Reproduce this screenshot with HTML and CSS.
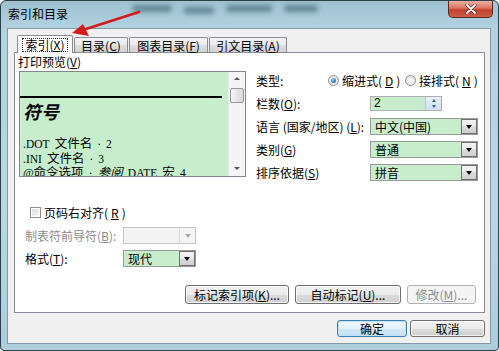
FILE: index.html
```html
<!DOCTYPE html>
<html>
<head>
    <meta charset="utf-8">
    <title>索引和目录</title>
    <link rel="stylesheet" href="styles.css">
</head>
<body>
<div class="window">
    <!-- red annotation arrow -->
    <svg class="arrow" width="150" height="40" viewBox="0 0 150 40">
        <line x1="139" y1="12" x2="86" y2="29" stroke="#d21c1c" stroke-width="2.6" stroke-linecap="round"/>
        <polygon points="72,33 83,24 89,36" fill="#d21c1c"/>
    </svg>

    <div class="titlebar">
        <span class="title">索引和目录</span>
        <div class="glass"><i class="g1"></i><i class="g2"></i><i class="g3"></i><i class="g4"></i></div>
        <div class="close">
            <svg width="12" height="10" viewBox="0 0 12 10">
                <path d="M2 1 L10 9 M10 1 L2 9" stroke="#5a2a22" stroke-width="3.2" stroke-linecap="round"/>
                <path d="M2 1 L10 9 M10 1 L2 9" stroke="#fff" stroke-width="1.8" stroke-linecap="round"/>
            </svg>
        </div>
    </div>

    <div class="client">
        <div class="tabs">
            <div class="tab active"><span class="focus">索引(<u>X</u>)</span></div>
            <div class="tab t2">目录(<u>C</u>)</div>
            <div class="tab t3">图表目录(<u>F</u>)</div>
            <div class="tab t4">引文目录(<u>A</u>)</div>
        </div>

        <div class="panel">
            <div class="top">
                <div class="left">
                    <div class="caption">打印预览(<u>V</u>)</div>
                    <div class="preview">
                        <div class="page">
                            <div class="rule"></div>
                            <div class="heading">符号</div>
                            <div class="entry first"><span class="lat">.DOT</span> 文件名 <span class="lat">· 2</span></div>
                            <div class="entry"><span class="lat">.INI</span> 文件名 <span class="lat">· 3</span></div>
                            <div class="entry"><span class="lat">@</span>命令选项 <span class="lat">·</span> <i>参阅</i> <span class="lat">DATE</span> 宏 <span class="lat">4</span></div>
                        </div>
                        <div class="vscroll">
                            <span class="up"></span>
                            <span class="thumb"></span>
                            <span class="down"></span>
                        </div>
                    </div>
                </div>

                <div class="right">
                    <div class="typerow">
                        <span class="typelabel">类型:</span>
                        <label class="opt first-opt"><span class="radio on"></span>缩进式(<u>D</u>)</label>
                        <label class="opt"><span class="radio"></span>接排式(<u>N</u>)</label>
                    </div>

                    <span>栏数(<u>O</u>):</span>
                    <div class="spin">
                        <span class="val">2</span>
                        <span class="btns"><span class="sup"></span><span class="sdown"></span></span>
                    </div>

                    <span>语言 (国家/地区) (<u>L</u>):</span>
                    <div class="combo"><span>中文(中国)</span><span class="drop"></span></div>

                    <span>类别(<u>G</u>)</span>
                    <div class="combo"><span>普通</span><span class="drop"></span></div>

                    <span>排序依据(<u>S</u>)</span>
                    <div class="combo"><span>拼音</span><span class="drop"></span></div>
                </div>
            </div>

            <div class="lower">
                <label class="checkrow"><span class="check"></span>页码右对齐(<u>R</u>)</label>

                <span class="disabled">制表符前导符(<u>B</u>):</span>
                <div class="combo off"><span></span><span class="drop"></span></div>

                <span>格式(<u>T</u>):</span>
                <div class="combo"><span>现代</span><span class="drop"></span></div>
            </div>

            <div class="actions">
                <button class="btn w1">标记索引项(<u>K</u>)...</button>
                <button class="btn w2">自动标记(<u>U</u>)...</button>
                <button class="btn w3 dis">修改(<u>M</u>)...</button>
            </div>
        </div>

        <div class="footer">
            <button class="btn ok">确定</button>
            <button class="btn cancel">取消</button>
        </div>
    </div>
</div>
</body>
</html>
```

FILE: styles.css
```css
* { box-sizing: border-box; }

body {
    margin: 0;
    background: #fff;
    font-family: "Noto Sans CJK SC", sans-serif;
    font-size: 12px;
    color: #000;
}

u { text-decoration: underline; }

.window {
    position: relative;
    width: 499px;
    height: 351px;
    border: 1px solid #2f3f4a;
    border-radius: 6px 6px 4px 4px;
    background: linear-gradient(#9ec2d1, #b2d2df 27px, #b9d7e4 60%, #abcddc);
    display: flex;
    flex-direction: column;
    overflow: hidden;
}

.arrow {
    position: absolute;
    top: -1px;
    left: -1px;
    z-index: 5;
}

/* title bar */
.titlebar {
    height: 27px;
    flex-shrink: 0;
    display: flex;
    align-items: flex-start;
}
.title {
    margin: 6px 0 0 7px;
    line-height: 14px;
}
.glass {
    display: flex;
    gap: 12px;
    margin: 4px 0 0 64px;
    filter: blur(2.5px);
    opacity: .6;
}
.glass i { height: 7px; background: #3c5f6e; border-radius: 3px; }
.glass .g1 { width: 40px; }
.glass .g2 { width: 30px; margin-top: 2px; }
.glass .g3 { width: 46px; }
.glass .g4 { width: 34px; }
.close {
    margin-left: auto;
    margin-right: 5px;
    width: 45px;
    height: 17px;
    border: 1px solid #5c2a22;
    border-top: none;
    border-radius: 0 0 5px 5px;
    background: linear-gradient(#eab0a2, #d9735e 45%, #c3402b 55%, #c96048);
    display: flex;
    align-items: center;
    justify-content: center;
}

/* client area */
.client {
    flex: 1;
    margin: 0 7px 6px 6px;
    background: #f0f0f0;
    border: 1px solid #8299a8;
    padding: 6px 5px 0 6px;
}

.tabs {
    display: flex;
    align-items: flex-end;
    height: 17px;
    padding-left: 3px;
}
.tab {
    height: 15px;
    margin-left: 1px;
    border: 1px solid #898c95;
    border-bottom: none;
    border-radius: 2px 2px 0 0;
    background: linear-gradient(#f3f3f3, #ebebeb 50%, #dedede 50%, #d2d2d2);
    display: flex;
    align-items: center;
    justify-content: center;
    line-height: 13px;
}
.tab.active {
    height: 18px;
    margin-left: 0;
    margin-bottom: -1px;
    width: 56px;
    background: #fff;
    position: relative;
    z-index: 1;
}
.t2 { width: 54px; }
.t3 { width: 79px; }
.t4 { width: 78px; }
.focus {
    border: 1px dotted #333;
    padding: 0 2px;
    line-height: 12px;
}

.panel {
    height: 261px;
    background: #fff;
    border: 1px solid #898c95;
    padding: 0 6px 0 3px;
    display: flex;
    flex-direction: column;
}

.top {
    display: grid;
    grid-template-columns: 228px 1fr;
    column-gap: 10px;
}

.caption {
    margin-top: 2px;
    line-height: 14px;
}

.preview {
    margin: 2px 0 0 1px;
    width: 227px;
    height: 106px;
    border: 1px solid #828790;
    display: flex;
}
.page {
    flex: 1;
    background: #c7edcc;
    overflow: hidden;
    padding-top: 24px;
}
.rule {
    height: 2px;
    background: #000;
    margin-right: 6px;
}
.heading {
    margin: 2px 0 0 3px;
    font-size: 18px;
    line-height: 22px;
    font-weight: bold;
    font-style: italic;
}
.entry {
    padding-left: 3px;
    font-family: "Liberation Serif", "Noto Sans CJK SC", serif;
    font-size: 12.5px;
    line-height: 14.5px;
    word-spacing: 2px;
    white-space: nowrap;
}
.entry.first { margin-top: 15px; }
.lat { font-size: 11.5px; }

.vscroll {
    width: 17px;
    background: #f4f4f4;
    border-left: 1px solid #e8e8e8;
    display: flex;
    flex-direction: column;
    align-items: center;
    padding: 5px 0 6px;
}
.up, .down {
    width: 0;
    height: 0;
    border-left: 3px solid transparent;
    border-right: 3px solid transparent;
}
.up { border-bottom: 3px solid #555; }
.down { border-top: 3px solid #555; margin-top: auto; }
.thumb {
    margin-top: 8px;
    width: 14px;
    height: 15px;
    border: 1px solid #979797;
    border-radius: 2px;
    background: linear-gradient(90deg, #f6f6f6, #e6e6e6 50%, #d9d9d9);
}

/* right column */
.right {
    padding-top: 19px;
    display: grid;
    grid-template-columns: 114px 1fr;
    grid-auto-rows: 17px;
    row-gap: 6px;
    align-items: center;
    white-space: nowrap;
}
.typerow {
    grid-column: 1 / -1;
    display: flex;
    align-items: center;
}
.typelabel { width: 72px; }
.opt {
    display: flex;
    align-items: center;
    gap: 3px;
}
.first-opt { width: 77px; }
.radio {
    width: 11px;
    height: 11px;
    border: 1px solid #8e8f8f;
    border-radius: 50%;
    background: radial-gradient(#fbfbfb, #dcdcdc);
    display: flex;
    align-items: center;
    justify-content: center;
}
.radio.on::after {
    content: "";
    width: 5px;
    height: 5px;
    border-radius: 50%;
    background: radial-gradient(circle at 40% 35%, #9fd3f5, #1e6fae 70%);
}

.spin {
    width: 72px;
    height: 15px;
    border: 1px solid #abadb3;
    background: #c7edcc;
    display: flex;
}
.spin .val {
    flex: 1;
    padding-left: 3px;
    line-height: 13px;
    font-family: "Liberation Sans", sans-serif;
}
.spin .btns {
    width: 16px;
    display: flex;
    flex-direction: column;
    justify-content: space-evenly;
    align-items: center;
    background: linear-gradient(#e8f1fb, #cddff1);
    border-left: 1px solid #b3c7dc;
}
.sup, .sdown {
    width: 0;
    height: 0;
    border-left: 2.5px solid transparent;
    border-right: 2.5px solid transparent;
}
.sup { border-bottom: 3px solid #4a5a6a; }
.sdown { border-top: 3px solid #4a5a6a; }

.combo {
    height: 17px;
    border: 1px solid #9a9a9a;
    background: #c7edcc;
    display: flex;
    align-items: center;
}
.combo span:first-child {
    flex: 1;
    padding-left: 4px;
    line-height: 15px;
}
.drop {
    width: 16px;
    height: 15px;
    border: 1px solid #707070;
    background: linear-gradient(#f2f2f2, #ebebeb 50%, #dddddd 50%, #cfcfcf);
    display: flex;
    align-items: center;
    justify-content: center;
}
.drop::after {
    content: "";
    border-left: 3.5px solid transparent;
    border-right: 3.5px solid transparent;
    border-top: 4px solid #000;
}
.combo.off {
    background: #f4f4f4;
    border-color: #c2c4c7;
}
.combo.off .drop {
    background: #f4f4f4;
    border: none;
    border-left: 1px solid #dadada;
}
.combo.off .drop::after { border-top-color: #a8a8a8; }

/* lower left */
.lower {
    margin-top: 23px;
    padding-left: 7px;
    display: grid;
    grid-template-columns: 98px 73px;
    grid-auto-rows: 17px;
    row-gap: 6px;
    align-items: center;
    white-space: nowrap;
}
.checkrow {
    grid-column: 1 / -1;
    padding-left: 5px;
    display: flex;
    align-items: center;
    gap: 3px;
}
.check {
    width: 11px;
    height: 11px;
    border: 1px solid #8f8f8f;
    background: linear-gradient(135deg, #dcdcdc, #f8f8f8);
    box-shadow: inset 0 0 0 1px #fff;
}
.disabled { color: #8d8d8d; }

/* buttons */
.actions {
    margin-top: 18px;
    padding-right: 2px;
    display: flex;
    justify-content: flex-end;
    gap: 6px;
}
.btn {
    height: 19px;
    padding: 0;
    border: 1px solid #707070;
    border-radius: 3px;
    background: linear-gradient(#f2f2f2, #ebebeb 50%, #dddddd 50%, #cfcfcf);
    box-shadow: inset 0 0 0 1px rgba(255, 255, 255, .7);
    font-family: "Noto Sans CJK SC", sans-serif;
    font-size: 12px;
    line-height: 15px;
    color: #000;
    white-space: nowrap;
}
.w1 { width: 104px; }
.w2 { width: 106px; }
.w3 { width: 69px; }
.btn.dis {
    border-color: #adb2b5;
    background: #f4f4f4;
    box-shadow: none;
    color: #8d8d8d;
}

.footer {
    margin-top: 7px;
    display: flex;
    justify-content: flex-end;
    gap: 3px;
}
.footer .btn { height: 17px; line-height: 13px; }
.ok {
    width: 70px;
    border-color: #3c7fb1;
    background: linear-gradient(#eef7fd, #e3f2fb 50%, #d0e8f7 50%, #c4e1f4);
    box-shadow: inset 0 0 0 1px #bfe3fa;
}
.cancel { width: 75px; }
```
